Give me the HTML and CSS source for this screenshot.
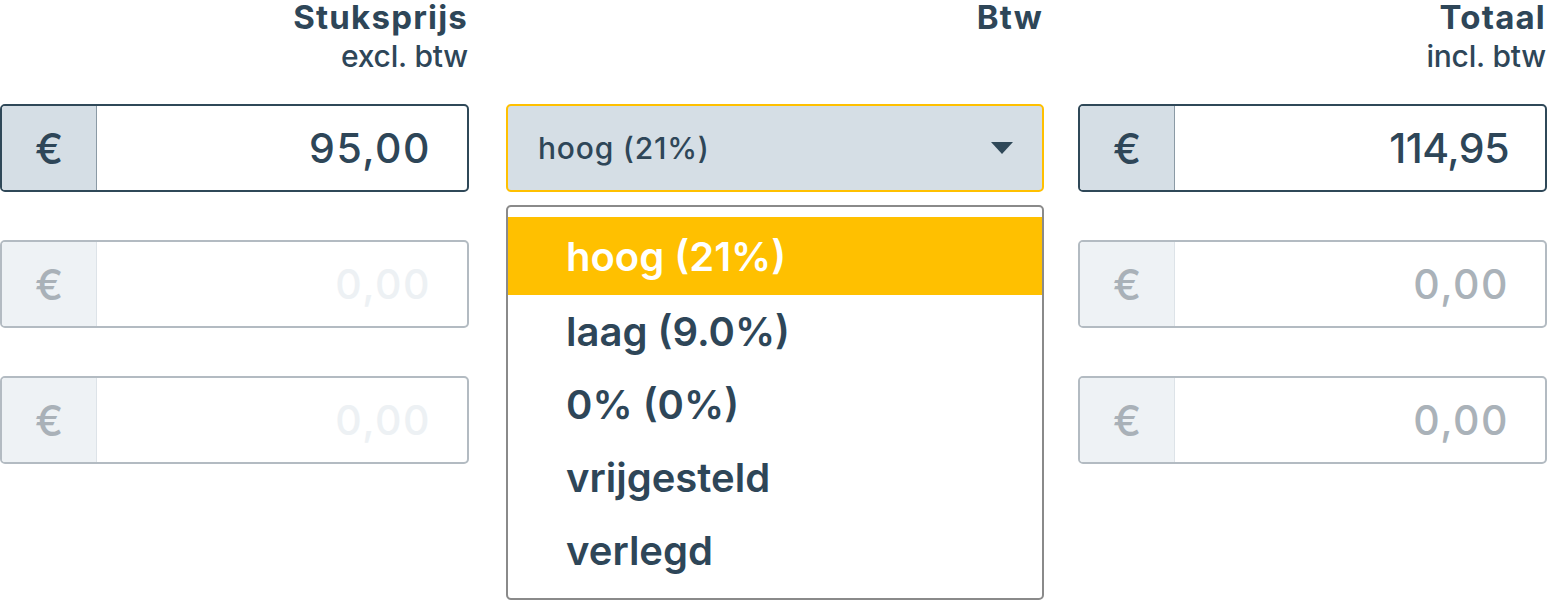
FILE: index.html
```html
<!DOCTYPE html>
<html lang="nl">
<head>
<meta charset="utf-8">
<title>Btw</title>
<link rel="stylesheet" href="styles.css">
</head>
<body>
<div class="grid">
  <div class="col col-price">
    <div class="head">
      <div class="title">Stuksprijs</div>
      <div class="sub">excl. btw</div>
    </div>
    <div class="rows">
      <div class="money active"><span class="cur">€</span><span class="val">95,00</span></div>
      <div class="money off light"><span class="cur">€</span><span class="val">0,00</span></div>
      <div class="money off light"><span class="cur">€</span><span class="val">0,00</span></div>
    </div>
  </div>
  <div class="col col-vat">
    <div class="head">
      <div class="title">Btw</div>
    </div>
    <div class="rows">
      <div class="select-wrap">
        <div class="select">
          <span>hoog (21%)</span>
          <svg class="caret" width="22" height="12" viewBox="0 0 22 12"><path d="M0 0H22L11 12Z" fill="#2f4858"/></svg>
        </div>
        <ul class="menu">
          <li class="sel">hoog (21%)</li>
          <li>laag (9.0%)</li>
          <li>0% (0%)</li>
          <li>vrijgesteld</li>
          <li>verlegd</li>
        </ul>
      </div>
    </div>
  </div>
  <div class="col col-total">
    <div class="head">
      <div class="title">Totaal</div>
      <div class="sub">incl. btw</div>
    </div>
    <div class="rows">
      <div class="money active"><span class="cur">€</span><span class="val val-total">114,95</span></div>
      <div class="money off"><span class="cur">€</span><span class="val">0,00</span></div>
      <div class="money off"><span class="cur">€</span><span class="val">0,00</span></div>
    </div>
  </div>
</div>
</body>
</html>
```
FILE: styles.css
```css
* { box-sizing: border-box; }
html, body { margin: 0; padding: 0; background: #fff; }
body {
  font-family: "Inter", "Noto Sans", sans-serif;
  color: #2e4658;
  width: 1547px;
  height: 601px;
  overflow: hidden;
}
.grid {
  display: flex;
  align-items: flex-start;
}
.col-price { width: 469px; }
.col-vat { width: 538px; margin-left: 37px; }
.col-total { width: 469px; margin-left: 34px; }

.head {
  height: 104px;
  text-align: right;
  padding-right: 1px;
}
.title {
  font-size: 33px;
  font-weight: 700;
  line-height: 34px;
  letter-spacing: 1.2px;
}
.sub {
  font-size: 30px;
  font-weight: 500;
  line-height: 44px;
  letter-spacing: -0.2px;
}

.rows {
  display: flex;
  flex-direction: column;
  gap: 48px;
}
.money {
  height: 88px;
  display: flex;
  border: 2px solid #2f4858;
  border-radius: 5px;
  overflow: hidden;
  background: #fff;
}
.cur {
  width: 95px;
  flex: none;
  display: flex;
  align-items: center;
  justify-content: center;
  background: #d5dee5;
  border-right: 1px solid #8b9aa5;
  font-size: 42px;
  font-weight: 500;
}
.val {
  flex: 1;
  display: flex;
  align-items: center;
  justify-content: flex-end;
  padding-right: 36px;
  font-size: 41px;
  font-weight: 500;
  letter-spacing: 1.5px;
}
.val-total { letter-spacing: -0.5px; }
.money.off { border-color: #b3bbc2; }
.money.off .cur {
  background: #eef2f5;
  border-right-color: #dde3e8;
  color: #a9b1b8;
}
.money.off .val { color: #aab2b9; }
.money.off.light .val { color: #edf1f4; }

.select-wrap { position: relative; }
.select {
  height: 88px;
  display: flex;
  align-items: center;
  justify-content: space-between;
  padding: 0 29px 0 30px;
  background: #d5dee5;
  border: 2px solid #ffc000;
  border-radius: 5px;
  font-size: 30px;
  font-weight: 500;
  letter-spacing: 0.8px;
}
.caret { display: block; }
.menu {
  position: absolute;
  left: 0;
  right: 0;
  top: 101px;
  height: 395px;
  margin: 0;
  padding: 10px 0 0;
  list-style: none;
  background: #fff;
  border: 2px solid #8a8a8a;
  border-radius: 5px;
}
.menu li {
  height: 73px;
  display: flex;
  align-items: center;
  padding-left: 58px;
  font-size: 40px;
  font-weight: 600;
  letter-spacing: 0;
}
.menu li.sel {
  background: #ffc000;
  color: #fff;
  height: 78px;
}
```
